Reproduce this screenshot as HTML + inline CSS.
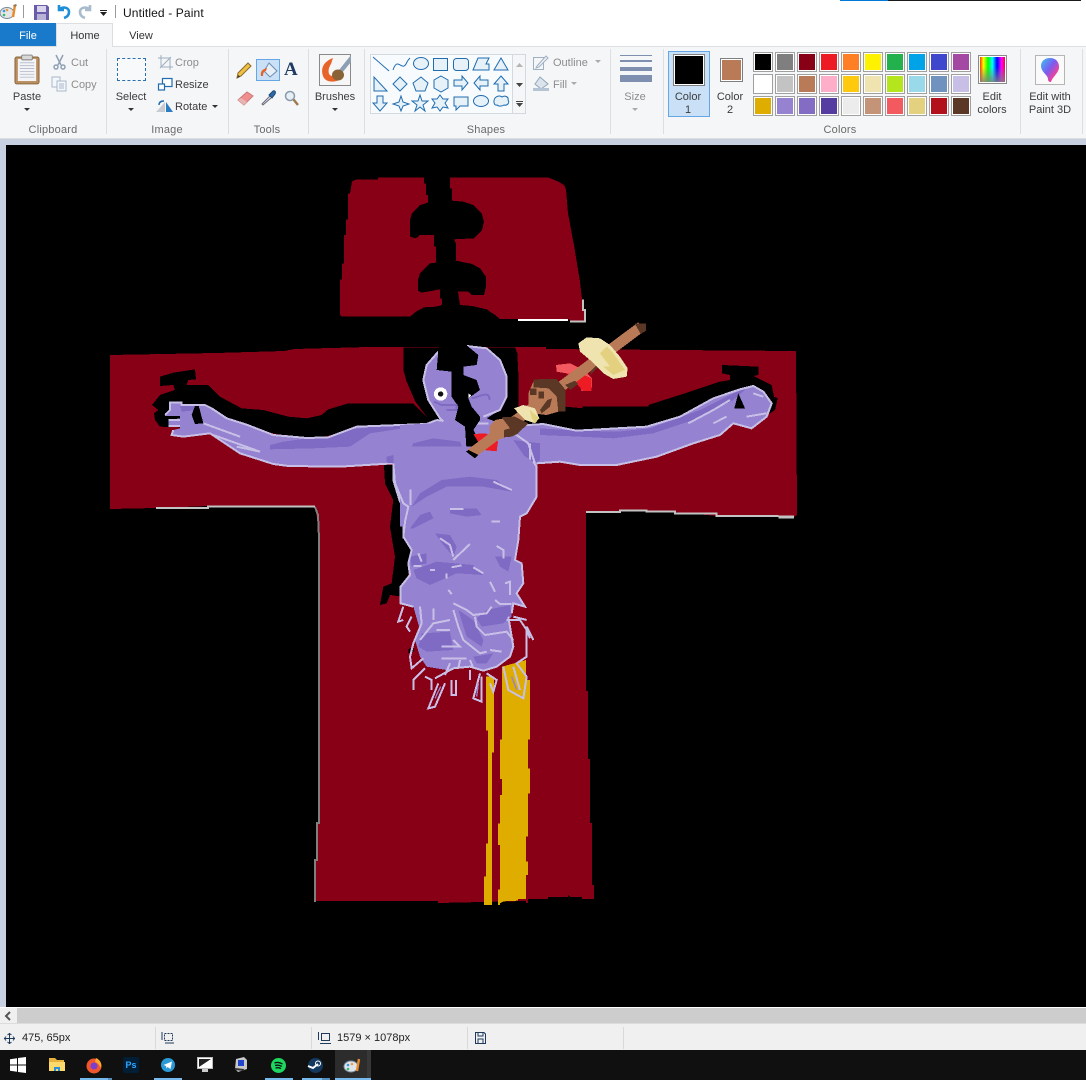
<!DOCTYPE html>
<html><head><meta charset="utf-8"><title>Untitled - Paint</title>
<style>
html,body{margin:0;padding:0;width:1086px;height:1080px;overflow:hidden;background:#fff}
body{position:relative;font-family:"Liberation Sans",sans-serif;font-size:11px;color:#3c3c3c}
.a{position:absolute}
.t{position:absolute;white-space:nowrap;line-height:14px;height:14px;margin-top:1px}
.c{transform:translateX(-50%);text-align:center}
.g{color:#8c8c8c}
.l{color:#6a6a6a;letter-spacing:.2px}
.s{position:absolute;top:49px;width:1px;height:85px;background:#dcdee0}
.p{position:absolute;width:18px;height:18px;border:1px solid #a0a0a0;box-shadow:inset 0 0 0 1px #fff}
svg{position:absolute;overflow:visible}
</style></head><body>

<!-- title -->
<div class="a" style="left:840px;top:0;width:48px;height:1px;background:#0078d7"></div>
<div class="a" style="left:888px;top:0;width:193px;height:1px;background:#1a1a1a"></div>
<svg style="left:0;top:2px" width="18" height="20" viewBox="0 0 18 20"><ellipse cx="7" cy="11" rx="7" ry="5.5" fill="#e6e6e6" stroke="#7a8a9a"/><circle cx="4" cy="9" r="1.3" fill="#2f9de0"/><circle cx="7" cy="8" r="1.3" fill="#e94"/><circle cx="4" cy="13" r="1.3" fill="#3b7"/><path d="M13 15L15 3" stroke="#e88a2a" stroke-width="2.4"/><path d="M13.5 4l3-1" stroke="#975" stroke-width="2"/></svg>
<div class="a" style="left:23px;top:5px;width:1px;height:13px;background:#9a9a9a"></div>
<svg style="left:34px;top:5px" width="15" height="15" viewBox="0 0 15 15"><path d="M0 0H13L15 2V15H0Z" fill="#6a5ca8"/><rect x="3" y="1" width="9" height="6" fill="#d9d4ec"/><rect x="3" y="9" width="9" height="6" fill="#b8b2d6"/></svg>
<svg style="left:56px;top:4px" width="15" height="16" viewBox="0 0 15 16"><path d="M3 1V6H8M3 6C6 2 13 3 13 8C13 11 11 13 8 14" fill="none" stroke="#1f8ed8" stroke-width="2.6"/></svg>
<svg style="left:78px;top:4px" width="15" height="16" viewBox="0 0 15 16"><path d="M12 1V6H7M12 6C9 2 2 3 2 8C2 11 4 13 7 14" fill="none" stroke="#a9bccd" stroke-width="2.6"/></svg>
<div class="a" style="left:100px;top:10px;width:7px;height:1px;background:#222"></div>
<svg style="left:100px;top:12px" width="7" height="4"><path d="M0 0H7L3.5 4Z" fill="#222"/></svg>
<div class="a" style="left:115px;top:5px;width:1px;height:13px;background:#9a9a9a"></div>
<div class="t" style="left:123px;top:5px;font-size:12px;color:#111;letter-spacing:.13px">Untitled - Paint</div>

<!-- tabs -->
<div class="a" style="left:0;top:23px;width:56px;height:23px;background:#1979ca"></div>
<div class="t c" style="left:28px;top:28px;color:#fff">File</div>
<div class="a" style="left:56px;top:23px;width:57px;height:24px;background:#f5f6f7;border:1px solid #dcdee0;border-bottom:0;box-sizing:border-box;z-index:2"></div>
<div class="t c" style="left:85px;top:28px;color:#333;z-index:3">Home</div>
<div class="t c" style="left:141px;top:28px;color:#333">View</div>

<!-- ribbon -->
<div class="a" style="left:0;top:46px;width:1086px;height:93px;background:#f5f6f7;border-top:1px solid #dcdee0;border-bottom:1px solid #dcdee0;box-sizing:border-box"></div>
<div class="a" style="left:0;top:139px;width:1086px;height:6px;background:#c7d0e1"></div>
<div class="a" style="left:0;top:145px;width:6px;height:862px;background:#c7d0e1"></div>
<div class="s" style="left:106px"></div><div class="s" style="left:228px"></div><div class="s" style="left:308px"></div><div class="s" style="left:364px"></div><div class="s" style="left:610px"></div><div class="s" style="left:663px"></div><div class="s" style="left:1020px"></div><div class="s" style="left:1082px"></div>

<!-- Clipboard -->
<svg style="left:14px;top:54px" width="26" height="31" viewBox="0 0 27 32"><rect x="1" y="3" width="25" height="28" rx="2" fill="#b98d5e" stroke="#86653f"/><rect x="4" y="5" width="19" height="23" fill="#f4f4f6"/><path d="M6 9H21M6 12H21M6 15H21M6 18H21M6 21H21M6 24H21" stroke="#b8c0d0"/><rect x="8" y="1" width="11" height="5" rx="1" fill="#d8d8d8" stroke="#808080"/></svg>
<div class="t c" style="left:27px;top:89px">Paste</div>
<svg style="left:24px;top:108px" width="6" height="3"><path d="M0 0H6L3 3Z" fill="#333"/></svg>
<svg style="left:53px;top:55px" width="13" height="15" viewBox="0 0 13 15" fill="none" stroke="#8fa0b5" stroke-width="1.5"><path d="M3 0L8 10M10 0L5 10"/><circle cx="3" cy="12" r="2"/><circle cx="10" cy="12" r="2"/></svg>
<div class="t g" style="left:71px;top:55px">Cut</div>
<svg style="left:51px;top:76px" width="16" height="16" viewBox="0 0 16 16" fill="#f3f6fa" stroke="#a9b8ca"><rect x="1" y="1" width="8" height="10"/><rect x="6" y="5" width="9" height="10"/><path d="M8 8h5M8 10h5M8 12h5"/></svg>
<div class="t g" style="left:71px;top:77px">Copy</div>
<div class="t c l" style="left:53px;top:122px">Clipboard</div>

<!-- Image -->
<div class="a" style="left:117px;top:58px;width:29px;height:23px;border:1px dashed #2a6fb0;box-sizing:border-box;background:#f8f9fa"></div>
<div class="t c" style="left:131px;top:89px">Select</div>
<svg style="left:128px;top:108px" width="6" height="3"><path d="M0 0H6L3 3Z" fill="#333"/></svg>
<svg style="left:158px;top:55px" width="15" height="15" viewBox="0 0 15 15" fill="none" stroke="#9fadc0"><path d="M3 0V12H15M0 3H12V15M2 13L13 2"/></svg>
<div class="t g" style="left:175px;top:55px">Crop</div>
<svg style="left:158px;top:78px" width="15" height="13" viewBox="0 0 15 13" fill="#fff" stroke="#1f6cb0" stroke-width="1.2"><rect x="4.5" y=".5" width="9.5" height="8"/><rect x=".5" y="6" width="6" height="6"/></svg>
<div class="t" style="left:175px;top:77px">Resize</div>
<svg style="left:156px;top:99px" width="17" height="14" viewBox="0 0 17 14"><path d="M0 13L9 3V13Z" fill="#c8ccd2"/><path d="M10 3L17 13H10Z" fill="#2c7cc0"/><path d="M3 6C3 3 5 2 8 2" fill="none" stroke="#1f6cb0" stroke-width="1.4"/></svg>
<div class="t" style="left:175px;top:99px">Rotate</div>
<svg style="left:212px;top:105px" width="6" height="3"><path d="M0 0H6L3 3Z" fill="#333"/></svg>
<div class="t c l" style="left:167px;top:122px">Image</div>

<!-- Tools -->
<div class="a" style="left:256px;top:59px;width:24px;height:22px;background:#c9e0f7;border:1px solid #64a6e6;box-sizing:border-box"></div>
<svg style="left:236px;top:62px" width="16" height="17" viewBox="0 0 16 17"><path d="M12 1L15 4L5 14L1 16L2 11Z" fill="#f0c040" stroke="#8a6a2a"/><path d="M1 16L2.5 13L4 14.5Z" fill="#333"/></svg>
<svg style="left:259px;top:61px" width="19" height="18" viewBox="0 0 19 18"><path d="M10 2L18 10L11 16L5 10Z" fill="#e6eff8" stroke="#6d8cad"/><path d="M2 15C1 10 4 8 8 7L7 10C5 10 4 12 4 15Z" fill="#e8632a"/></svg>
<div class="a" style="left:284px;top:58px;font:bold 19px 'Liberation Serif',serif;color:#1f3a63;line-height:24px">A</div>
<svg style="left:237px;top:91px" width="17" height="15" viewBox="0 0 17 15"><path d="M1 9L10 1L16 5L7 14Z" fill="#f08f8f" stroke="#c77"/><path d="M1 9L7 14L10 11L4 7Z" fill="#e8b4b4"/></svg>
<svg style="left:261px;top:90px" width="15" height="16" viewBox="0 0 15 16"><path d="M9 6L1 14L2 15L10 8" fill="#e8eef4" stroke="#667"/><path d="M8 5L12 1C14 0 15 2 14 4L11 8Z" fill="#2a6aa8" stroke="#1d4a78"/></svg>
<svg style="left:284px;top:90px" width="15" height="16" viewBox="0 0 15 16" fill="none"><circle cx="6" cy="6" r="4.5" fill="#e6eef6" stroke="#8a9aaa" stroke-width="1.5"/><path d="M9.5 9.5L14 15" stroke="#a07a50" stroke-width="2.5"/></svg>
<div class="t c l" style="left:267px;top:122px">Tools</div>

<!-- Brushes -->
<svg style="left:319px;top:54px" width="32" height="32" viewBox="0 0 32 32"><rect x=".5" y=".5" width="31" height="31" fill="#f6f6f6" stroke="#8a8a8a"/><path d="M14 4C6 7 1 13 4 22C6 28 14 29 20 26L15 22C9 23 8 16 12 10Z" fill="#e8632a"/><path d="M32 1L20 16L23 19L32 8Z" fill="#8da0b3"/><ellipse cx="19" cy="21" rx="6" ry="5.5" fill="#8a6238"/></svg>
<div class="t c" style="left:335px;top:89px">Brushes</div>
<svg style="left:332px;top:108px" width="6" height="3"><path d="M0 0H6L3 3Z" fill="#333"/></svg>

<!-- Shapes -->
<div class="a" style="left:370px;top:54px;width:143px;height:60px;background:#f8fbfd;border:1px solid #d5d8dc;box-sizing:border-box"></div>
<div class="a" style="left:512px;top:54px;width:14px;height:60px;background:#f5f6f7;border:1px solid #d5d8dc;box-sizing:border-box"></div>
<svg style="left:516px;top:63px" width="7" height="4"><path d="M0 4H7L3.5 0Z" fill="#b5b5b5"/></svg>
<svg style="left:516px;top:83px" width="7" height="4"><path d="M0 0H7L3.5 4Z" fill="#444"/></svg>
<div class="a" style="left:516px;top:101px;width:7px;height:1px;background:#444"></div>
<svg style="left:516px;top:103px" width="7" height="4"><path d="M0 0H7L3.5 4Z" fill="#444"/></svg>
<svg style="left:360px;top:50px" width="160" height="65" viewBox="0 0 160 65" fill="#e6f1f8" stroke="#1f6cb0" stroke-width="1">
<path d="M13 7L29 21" fill="none"/><path d="M33 20C38 5 42 24 47 12C48 10 49 9 50 8" fill="none"/>
<ellipse cx="61" cy="13.500" rx="7.500" ry="6"/><rect x="73.500" y="8.500" width="14" height="12"/><rect x="93.500" y="8.500" width="15" height="12" rx="3"/><path d="M113 20L118 8H129L126 14H129V20Z"/><path d="M134 20L141 8L148 20Z"/>
<path d="M14 27V41H27Z"/><path d="M40 27L47 34L40 41L33 34Z"/><path d="M61 27L68 33L65 41H56L53 33Z"/><path d="M81 26L88 30V38L81 42L74 38V30Z"/><path d="M94 30H102V26L108 33L102 40V36H94Z"/><path d="M128 30H120V26L114 33L120 40V36H128Z"/><path d="M141 26L148 34H144V41H138V34H134Z"/>
<g transform="translate(0 -4)"><path d="M17 50V57H13L20 65L27 57H23V50Z"/><path d="M41 50L43 56L49 58L43 60L41 65L39 60L33 58L39 56Z"/><path d="M60 49L62 55L68 55L63 59L65 65L60 61L55 65L57 59L52 55L58 55Z"/><path d="M80 49L83 53L88 53L85 57L88 62L83 61L80 65L77 61L72 62L75 57L72 53L77 53Z"/><path d="M94 51H108V60H100L96 64V60H94Z"/><ellipse cx="121" cy="55" rx="7.500" ry="5.500"/><path d="M135 52C138 49 141 50 142 51C145 49 149 51 148 54C150 57 147 60 144 59C141 61 138 60 137 59C134 60 133 55 135 52Z"/></g></svg>
<svg style="left:533px;top:55px" width="16" height="15" viewBox="0 0 16 15" fill="none" stroke="#9fb0c2"><rect x=".5" y="2.500" width="10" height="12"/><path d="M4 11L13 1L15 3L6 12L3 13Z" fill="#eef2f6"/></svg>
<div class="t g" style="left:553px;top:55px">Outline</div>
<svg style="left:595px;top:60px" width="6" height="3"><path d="M0 0H6L3 3Z" fill="#aaa"/></svg>
<svg style="left:533px;top:76px" width="16" height="16" viewBox="0 0 16 16"><path d="M7 1L15 8L8 13L2 8Z" fill="#dbe4ed" stroke="#92a6ba"/><rect x="0" y="12" width="16" height="3" fill="#b4c4d4"/></svg>
<div class="t g" style="left:553px;top:77px">Fill</div>
<svg style="left:571px;top:82px" width="6" height="3"><path d="M0 0H6L3 3Z" fill="#aaa"/></svg>
<div class="t c l" style="left:486px;top:122px">Shapes</div>

<!-- Size -->
<div class="a" style="left:620px;top:55px;width:32px;height:1px;background:#7e8fb0"></div>
<div class="a" style="left:620px;top:60px;width:32px;height:2px;background:#7e8fb0"></div>
<div class="a" style="left:620px;top:67px;width:32px;height:4px;background:#7e8fb0"></div>
<div class="a" style="left:620px;top:75px;width:32px;height:7px;background:#7e8fb0"></div>
<div class="t c g" style="left:635px;top:89px">Size</div>
<svg style="left:632px;top:108px" width="6" height="3"><path d="M0 0H6L3 3Z" fill="#aaa"/></svg>

<!-- Colors -->
<div class="a" style="left:668px;top:51px;width:42px;height:66px;background:#c9e0f7;border:1px solid #64a6e6;box-sizing:border-box"></div>
<div class="a" style="left:673px;top:54px;width:32px;height:32px;background:#000;border:1px solid #7f7f7f;box-shadow:inset 0 0 0 1px #fff;box-sizing:border-box"></div>
<div class="t c" style="left:688px;top:89px">Color</div><div class="t c" style="left:688px;top:102px">1</div>
<div class="a" style="left:720px;top:58px;width:23px;height:24px;background:#b97a57;border:1px solid #7f7f7f;box-shadow:inset 0 0 0 1px #fff;box-sizing:border-box"></div>
<div class="t c" style="left:730px;top:89px">Color</div><div class="t c" style="left:730px;top:102px">2</div>
<div class="p" style="left:753px;top:52px;background:#000"></div><div class="p" style="left:775px;top:52px;background:#7f7f7f"></div><div class="p" style="left:797px;top:52px;background:#880015"></div><div class="p" style="left:819px;top:52px;background:#ed1c24"></div><div class="p" style="left:841px;top:52px;background:#ff7f27"></div><div class="p" style="left:863px;top:52px;background:#fff200"></div><div class="p" style="left:885px;top:52px;background:#22b14c"></div><div class="p" style="left:907px;top:52px;background:#00a2e8"></div><div class="p" style="left:929px;top:52px;background:#3f48cc"></div><div class="p" style="left:951px;top:52px;background:#a349a4"></div>
<div class="p" style="left:753px;top:74px;background:#fff"></div><div class="p" style="left:775px;top:74px;background:#c3c3c3"></div><div class="p" style="left:797px;top:74px;background:#b97a57"></div><div class="p" style="left:819px;top:74px;background:#ffaec9"></div><div class="p" style="left:841px;top:74px;background:#ffc90e"></div><div class="p" style="left:863px;top:74px;background:#efe4b0"></div><div class="p" style="left:885px;top:74px;background:#b5e61d"></div><div class="p" style="left:907px;top:74px;background:#99d9ea"></div><div class="p" style="left:929px;top:74px;background:#7092be"></div><div class="p" style="left:951px;top:74px;background:#c8bfe7"></div>
<div class="p" style="left:753px;top:96px;background:#dfac00"></div><div class="p" style="left:775px;top:96px;background:#9583d1"></div><div class="p" style="left:797px;top:96px;background:#836cc4"></div><div class="p" style="left:819px;top:96px;background:#553ca0"></div><div class="p" style="left:841px;top:96px;background:#ececec"></div><div class="p" style="left:863px;top:96px;background:#c49478"></div><div class="p" style="left:885px;top:96px;background:#f25a60"></div><div class="p" style="left:907px;top:96px;background:#e3d17f"></div><div class="p" style="left:929px;top:96px;background:#b2111b"></div><div class="p" style="left:951px;top:96px;background:#5b3825"></div>
<div class="a" style="left:978px;top:55px;width:29px;height:29px;border:1px solid #8a8a8a;box-shadow:inset 0 0 0 1px #fff;box-sizing:border-box;background:linear-gradient(to bottom,rgba(128,128,128,0) 40%,rgba(128,128,128,.9)),linear-gradient(to right,#f00,#ff0,#0f0,#0ff,#00f,#f0f,#f00)"></div>
<div class="t c" style="left:992px;top:89px">Edit</div><div class="t c" style="left:992px;top:102px">colors</div>
<div class="t c l" style="left:840px;top:122px">Colors</div>
<div class="a" style="left:1035px;top:55px;width:30px;height:30px;background:#fafafa;border:1px solid #b5b5b5;box-sizing:border-box"></div>
<svg style="left:1040px;top:57px" width="20" height="26" viewBox="0 0 20 26"><defs><linearGradient id="q" x1="0" y1="0" x2="1" y2="1"><stop offset="0" stop-color="#38c6ef"/><stop offset=".45" stop-color="#7a5cf0"/><stop offset=".75" stop-color="#f0409a"/><stop offset="1" stop-color="#f7a030"/></linearGradient></defs><path d="M10 1C16 1 19 5 19 10C19 16 13 19 11 25C9 25 8 24 8 22C8 18 1 15 1 9C1 4 5 1 10 1Z" fill="url(#q)"/></svg>
<div class="t c" style="left:1050px;top:89px">Edit with</div><div class="t c" style="left:1050px;top:102px">Paint 3D</div>

<!-- canvas -->
<div class="a" style="left:6px;top:145px;width:1080px;height:862px;background:#000"></div>
<svg class="a" style="left:0;top:0" width="1086" height="1080" viewBox="0 0 1086 1080" shape-rendering="crispEdges">
<!-- main cross -->
<polygon fill="#880015" points="110,355 216,353 284,351 294,349 368,347 403,347 515,347 546,347 546,349 796,351 797,515 794,517 778,516 717,516 675,512 620,511 586,512 586,691 588,691 588,759 590,759 590,823 592,823 592,885 594,885 594,899 582,899 582,897 570,897 568,895 568,897 548,897 548,899 528,899 528,903 526,903 526,901 438,903 438,901 316,901 316,860 318,860 318,823 320,823 320,538 318,525 315,507 208,506 156,508 110,509"/>
<!-- top block -->
<g transform="translate(330 170) scale(.33333)">
<polygon fill="#880015" points="144,22 282,22 282,40 288,40 288,75 294,75 294,98 270,105 246,130 240,150 240,200 258,205 270,195 312,195 312,230 318,230 318,278 300,280 270,310 264,330 264,362 276,368 330,358 330,385 336,385 336,405 318,410 282,412 258,425 240,440 36,440 30,435 30,328 36,328 36,280 42,280 42,195 48,195 48,148 54,148 54,70 60,70 66,35 78,28 144,28"/>
<polygon fill="#880015" points="360,22 654,22 685,35 702,45 708,58 714,130 720,160 726,195 732,225 738,262 744,298 750,335 756,388 756,420 762,420 762,452 720,452 714,447 510,447 495,435 470,418 426,408 390,405 384,365 414,365 426,375 462,375 468,350 468,320 450,295 426,282 378,272 378,220 372,208 432,205 456,180 462,155 455,130 430,105 400,95 366,92 366,55 360,55"/>
<path d="M564 450H714" stroke="#fff" stroke-width="6" fill="none"/>
<path d="M720 455H765V420H759V388" stroke="#c3c3c3" stroke-width="6" fill="none"/>
</g>
<!-- lines -->
<path d="M156 508H208V506.500H315" stroke="#c3c3c3" stroke-width="2" fill="none"/>
<path d="M315 507L318 515L319 538V823H317V860H315V902" stroke="#7f7f7f" stroke-width="2" fill="none"/>
<g transform="translate(400 310) scale(.33333)"><path d="M558 606H660V601H740V604H825V611H950V618H1135" stroke="#c3c3c3" stroke-width="6" fill="none"/><path d="M1135 621H1182" stroke="#c3c3c3" stroke-width="9" fill="none"/></g>
<!-- yellow -->
<g transform="translate(300 680) scale(.33333)" fill="#dfac00">
<polygon points="558,-10 582,-10 582,218 576,218 576,675 552,675 552,590 558,590 558,490 564,490 564,152 558,152"/>
<polygon points="606,-40 678,-60 678,0 690,0 690,178 684,178 684,266 690,266 690,340 684,340 684,470 678,470 678,544 684,544 684,585 678,585 678,657 654,657 654,662 612,664 600,670 600,675 594,675 594,628 600,628 600,495 594,495 594,430 600,430 600,345 606,345 606,297 600,297 600,178 606,178"/>
</g>
<!-- black shadows -->
<g transform="translate(140 320) scale(.33333)" fill="#000">
<polygon points="60,170 100,158 165,148 168,178 145,180 140,195 205,195 240,230 305,265 370,270 445,290 500,295 545,285 565,268 625,250 820,250 860,290 860,330 700,320 500,360 300,320 200,260 150,300 120,322 60,320 45,300 42,280 55,270 36,255 60,225 105,210 100,195 60,198"/>
<polygon points="790,82 1100,82 1100,420 860,420 860,290 826,245 800,185 790,150"/>
</g>
<g transform="translate(400 310) scale(.33333)" fill="#000">
<polygon points="345,112 352,130 355,190 355,290 497,290 548,295 548,290 745,290 745,285 870,245 960,215 990,210 990,195 966,190 966,165 1075,170 1075,195 1060,198 1115,225 1122,260 1133,265 1125,300 1110,310 1000,340 500,390 300,390 250,112"/>
</g>
<g transform="translate(370 450) scale(.33333)" fill="#000">
<polygon points="42,45 45,100 70,150 60,230 75,320 65,400 40,410 30,465 50,460 60,435 95,440 130,320 120,200 100,160 70,45"/>
<polygon points="115,598 130,590 130,605 115,610"/>
</g>
<!-- body -->
<g transform="translate(140 320) scale(.33333)">
<polygon fill="#9583d1" points="90,248 125,248 125,255 195,252 215,265 260,295 320,314 400,345 500,354 565,352 650,320 860,312 890,300 960,310 975,350 985,420 800,660 790,655 800,555 780,545 760,480 760,430 600,440 445,438 400,432 300,400 210,340 130,350 95,345 100,330 120,325 120,318 85,318 85,300 120,295 120,288 75,288 75,280 90,270"/>
<polygon fill="#7f6bc4" points="390,375 430,365 480,358 565,352 620,330 700,320 760,315 850,318 790,325 690,340 630,380 520,385 390,388"/>
<polygon fill="#7f6bc4" points="800,410 830,375 880,355 960,365 980,395 860,392"/>
<polygon fill="#7f6bc4" points="120,255 170,255 170,270 125,275"/>
<polygon fill="#000" points="165,258 175,253 190,310 165,312 155,285"/>
<path fill="none" stroke="#c8bfe7" stroke-width="6" d="M75 285L90 270V248H125V255H195L215 265L260 295L320 314L400 345L500 354L565 352L650 320L860 312L890 300"/>
<path fill="none" stroke="#c8bfe7" stroke-width="6" d="M85 300H120M85 318H120M100 330L95 345L130 350L210 340L300 400L400 432L445 438L600 440L760 430V480L780 545L800 555L790 620V655"/>
<path d="M890 300L960 310L975 350L985 395M815 375C850 350 920 350 960 365M190 310L300 350M220 345L360 395M290 380L360 395" stroke="#c8bfe7" stroke-width="6" fill="none"/>
<polygon fill="#7f6bc4" points="740,410 760,405 760,430 740,428"/>
</g>
<g transform="translate(400 310) scale(.33333)">
<polygon fill="#9583d1" points="340,348 430,342 530,362 650,355 740,350 840,320 940,265 1020,238 1060,228 1090,245 1115,280 1100,320 1055,355 1000,340 960,375 880,400 770,440 650,465 540,465 480,455 410,460 410,560 360,620 300,640 280,400"/>
<polygon fill="#9583d1" points="115,125 80,165 70,210 85,270 120,325 130,338 0,345 0,650 330,650 300,340 260,325 300,300 320,260 320,200 300,150 260,115 200,108"/>
<polygon fill="#7f6bc4" points="530,362 650,365 750,355 900,300 1000,250 1040,235 1000,270 880,330 760,370 640,385 540,380 420,375 420,355"/>
<polygon fill="#7f6bc4" points="20,440 40,400 100,385 180,395 190,420 100,410 40,420"/>
<polygon fill="#7f6bc4" points="340,390 420,400 420,450 395,470"/>
<polygon fill="#000" points="1015,250 1035,295 1003,295"/>
<path fill="none" stroke="#c8bfe7" stroke-width="6" d="M340 348L430 342L530 362L650 355L740 350L840 320L940 265L1020 238L1060 228L1090 245L1115 280L1100 320L1055 355L1000 340L960 375L880 400L770 440L650 465L540 465L480 455L410 460"/>
<path fill="none" stroke="#c8bfe7" stroke-width="6" d="M115 125L80 165L70 210L85 270L120 325L130 335M200 108L260 115L300 150L320 200V260L300 300L250 320M215 340H265"/>
<path d="M865 340L940 300L990 270M940 340L980 320M1040 320L1100 310M1060 250L1090 260M300 340L385 400L405 460M390 400V450" stroke="#c8bfe7" stroke-width="6" fill="none"/>
<!-- hair -->
<polygon fill="#000" points="115,122 110,180 155,185 155,260 175,290 165,330 195,350 200,425 215,435 240,395 220,360 240,330 240,320 215,290 205,265 240,240 230,210 190,195 190,170 230,165 235,135 200,106 120,90"/>
<circle cx="122" cy="252" r="20" fill="#fff"/><circle cx="122" cy="252" r="8" fill="#111"/>
<path d="M102 275L125 285H170V300H140M215 265C240 260 270 240 268 270" stroke="#7f6bc4" stroke-width="6" fill="none"/>
<polygon points="205,250 214,256 205,265" fill="#fff"/>
<path d="M33 538V610M150 597H190M275 637H300M350 580V650" stroke="#c8bfe7" stroke-width="6" fill="none"/>
<polygon fill="#7f6bc4" points="150,600 240,598 246,620 160,620"/>
<polygon fill="#7f6bc4" points="30,650 60,615 100,605 100,625 50,655"/>
<polygon fill="#7f6bc4" points="20,520 130,500 240,510 330,540 240,520 130,515 30,540"/>
</g>
<g transform="translate(370 450) scale(.33333)">
<polygon fill="#9583d1" points="70,40 75,100 100,160 115,170 105,215 100,260 125,300 115,340 120,375 92,410 92,460 130,470 150,540 135,570 150,620 170,650 230,660 290,650 340,662 380,650 420,620 430,590 415,500 425,490 430,460 465,470 440,430 460,400 455,340 435,330 445,270 450,200 470,190 500,140 500,50 490,35 420,-10 90,-10"/>
<g fill="#7f6bc4">
<polygon points="125,170 150,130 215,90 300,80 380,90 425,125 340,110 230,110 170,140"/>
<polygon points="120,235 150,195 180,185 190,205 130,235"/>
<polygon points="240,190 240,175 320,175 335,195 290,200"/>
<polygon points="195,250 240,255 260,290 250,320 220,285"/>
<polygon points="120,320 170,310 170,340 125,350"/>
<polygon points="130,360 200,335 310,345 340,375 260,370 180,405 140,385"/>
<polygon points="375,320 425,320 415,365 390,350"/>
<polygon points="350,480 420,465 425,500 400,520 335,530 320,505"/>
<polygon points="265,480 310,510 340,570 335,590 290,560"/>
<polygon points="155,550 240,545 250,600 170,605 145,590"/>
<polygon points="310,620 370,610 350,640 320,640"/>
</g>
<path fill="none" stroke="#c8bfe7" stroke-width="6" d="M70 40L75 100L100 160L115 170L105 215L100 260L125 300L115 340L120 375L92 410V460L130 470M500 50V140L470 190L450 200L445 270L435 330L455 340L460 400L440 430L465 470L430 460L425 490M500 50L490 35"/>
<path fill="none" stroke="#c8bfe7" stroke-width="6" d="M122 118V165M370 95L425 120M240 177H280M365 215H390M210 265L240 285L250 320M300 282L260 320L250 330M380 288L400 300V325M130 348H155M145 310L155 335M180 360H195M245 352L275 346M310 352L340 370M230 370V385M360 395L375 425M235 420L245 432M375 450L390 462H425M405 400L420 395V435M250 460L290 480L310 495L350 490L365 470M315 500L320 530L345 555L410 545L430 570M410 510H450L470 540L480 565M250 480L265 530L280 570L330 610L350 605M200 540H240M240 510L190 520L150 570M190 475V510M215 590H270L250 570M360 600L395 605M215 625H290M240 640L225 675M270 630L265 655M300 630L310 655"/>
<!-- lower edge and tendrils -->
<path fill="none" stroke="#c8bfe7" stroke-width="6" d="M100 470L85 515L100 510M125 500L110 530L120 545M150 470L155 520L130 580L120 620L125 655L160 625M165 655L130 690V720M165 680L185 690V720M205 700L175 775L195 770L225 700M195 685L250 655L300 650L340 662L380 650L420 620L430 590L415 500M245 690V735H258V690M300 660V690M330 670L310 745L335 755V680M350 670L380 690L370 725L360 700M400 650L415 720L460 745L470 680L440 640L470 620V530L490 570M430 500L470 510M430 650L450 720"/>
<path fill="none" stroke="#9583d1" stroke-width="4" d="M195 745L212 710M325 700L320 740M425 680L440 720"/>
</g>
<!-- skewer -->
<g transform="translate(400 310) scale(.33333)">
<polygon fill="#ed1c24" points="220,372 258,370 294,395 290,424 250,420"/>
<polygon fill="#f25a60" points="468,165 510,160 552,180 576,205 575,243 545,243 535,205 500,190 470,185"/>
<polygon fill="#ed1c24" points="500,190 540,190 575,205 575,243 550,243"/>
<path d="M212 432L724 50" stroke="#b97a57" stroke-width="32" fill="none"/>
<polygon fill="#5b3825" points="704,40 738,40 738,62 722,72"/>
<polygon fill="#5b3825" points="575,180 600,155 596,170 570,195"/>
<polygon fill="#efe4b0" points="535,100 560,82 600,85 630,105 660,140 683,175 680,200 640,207 610,190 570,150 540,125"/>
<polygon fill="#e3d17f" points="620,110 640,130 675,180 640,195 610,170 630,170 600,130"/>
<polygon fill="#b97a57" points="385,250 400,215 470,207 497,240 497,300 475,305 440,315 400,310 385,290"/>
<polygon fill="#5b3825" points="400,208 470,207 497,240 497,305 475,305 470,260 445,235 400,232"/>
<polygon fill="#5b3825" points="390,235 410,235 410,255 390,255"/>
<polygon fill="#5b3825" points="415,245 432,245 432,265 415,265"/>
<polygon fill="#5b3825" points="442,270 456,265 450,290 425,310 420,300"/>
<polygon fill="#5b3825" points="495,225 525,212 535,222 510,240"/>
<polygon fill="#efe4b0" points="342,295 370,285 405,295 418,325 405,340 375,330"/>
<polygon fill="#e3d17f" points="390,300 418,325 405,340 395,325"/>
<polygon fill="#b97a57" points="268,350 285,330 340,320 350,345 330,375 300,388 270,370"/>
<polygon fill="#5b3825" points="305,322 345,320 385,340 352,372 335,380 312,382 312,360 330,355"/>
<polygon fill="#000" points="198,425 225,445 235,435 205,420"/>
</g>
</svg>

<!-- scrollbar -->
<div class="a" style="left:0;top:1007px;width:1086px;height:1px;background:#fff"></div>
<div class="a" style="left:0;top:1008px;width:1086px;height:15px;background:#cdcdcd"></div>
<div class="a" style="left:0;top:1008px;width:17px;height:15px;background:#f0f0f0"></div>
<svg style="left:4px;top:1011px" width="8" height="10" viewBox="0 0 8 10"><path d="M6 1L2 5L6 9" fill="none" stroke="#555" stroke-width="2"/></svg>
<!-- status -->
<div class="a" style="left:0;top:1023px;width:1086px;height:27px;background:#f0f0f0;border-top:1px solid #dcdcdc;box-sizing:border-box"></div>
<div class="a" style="left:155px;top:1027px;width:1px;height:22px;background:#d9d9d9"></div>
<div class="a" style="left:311px;top:1027px;width:1px;height:22px;background:#d9d9d9"></div>
<div class="a" style="left:467px;top:1027px;width:1px;height:22px;background:#d9d9d9"></div>
<div class="a" style="left:623px;top:1027px;width:1px;height:22px;background:#d9d9d9"></div>
<svg style="left:4px;top:1033px" width="11" height="11" viewBox="0 0 11 11" fill="none" stroke="#1f3a5c"><path d="M5.500 0V11M0 5.500H11M3.500 2L5.500 .5L7.500 2M3.500 9L5.500 10.500L7.500 9M2 3.500L.5 5.500L2 7.500M9 3.500L10.500 5.500L9 7.500"/></svg>
<div class="t" style="left:22px;top:1030px;color:#222">475, 65px</div>
<svg style="left:161px;top:1032px" width="13" height="13" viewBox="0 0 13 13" fill="none" stroke="#1f3a5c"><rect x="3.500" y="1.500" width="8" height="7" stroke-dasharray="2 1"/><path d="M1 0V8M4 11H13"/></svg>
<svg style="left:317px;top:1032px" width="14" height="13" viewBox="0 0 14 13" fill="none" stroke="#1f3a5c"><rect x="4.500" y="1.500" width="8" height="7"/><path d="M1.500 0V8M3 11.500H14"/></svg>
<div class="t" style="left:337px;top:1030px;color:#222">1579 × 1078px</div>
<svg style="left:475px;top:1032px" width="11" height="12" viewBox="0 0 11 12" fill="none" stroke="#1f3a5c"><path d="M.5.500H9L10.500 2V11.500H.5Z"/><path d="M3 .5V4H8V.5M3 11.500V7H8V11.500"/></svg>

<!-- taskbar -->
<div class="a" style="left:0;top:1050px;width:1086px;height:30px;background:#101010"></div>
<div class="a" style="left:335px;top:1050px;width:32px;height:30px;background:#2c2c2c"></div>
<div class="a" style="left:367px;top:1050px;width:4px;height:30px;background:#383838"></div>
<div class="a" style="left:80px;top:1078px;width:28px;height:2px;background:#76b9ed"></div><div class="a" style="left:108px;top:1078px;width:4px;height:2px;background:#5590bc"></div>
<div class="a" style="left:154px;top:1078px;width:28px;height:2px;background:#76b9ed"></div>
<div class="a" style="left:265px;top:1078px;width:28px;height:2px;background:#76b9ed"></div>
<div class="a" style="left:302px;top:1078px;width:20px;height:2px;background:#76b9ed"></div><div class="a" style="left:322px;top:1078px;width:8px;height:2px;background:#5590bc"></div>
<div class="a" style="left:335px;top:1078px;width:36px;height:2px;background:#76b9ed"></div>
<svg style="left:10px;top:1057px" width="16" height="16" viewBox="0 0 16 16" fill="#fff"><path d="M0 2.200L7 1.200V7.500H0ZM8 1L16 0V7.500H8ZM0 8.500H7V14.800L0 13.800ZM8 8.500H16V16L8 15Z"/></svg>
<svg style="left:49px;top:1057px" width="16" height="15" viewBox="0 0 16 15"><path d="M0 1H6L8 3H15V14H0Z" fill="#e8b33c"/><path d="M0 5H16V14H0Z" fill="#fbd96b"/><path d="M5 14V10H11V14H9V12H7V14Z" fill="#2a8fd8"/></svg>
<svg style="left:86px;top:1057px" width="16" height="16" viewBox="0 0 16 16"><circle cx="8" cy="9" r="7.500" fill="#f0552c"/><path d="M10 1C15 3 16 8 15 11C13 8 12 6 9 5Z" fill="#ffa92c"/><circle cx="8" cy="9" r="3.500" fill="#7b3fd0"/></svg>
<div class="a" style="left:123px;top:1057px;width:16px;height:16px;background:#001e36;border-radius:2px;color:#31a8ff;font:bold 9px/16px 'Liberation Sans',sans-serif;text-align:center">Ps</div>
<svg style="left:161px;top:1058px" width="14" height="14" viewBox="0 0 14 14"><circle cx="7" cy="7" r="7" fill="#2a9ad6"/><path d="M2.500 7L11 3.500L9.500 11L6.500 9L5.500 10.500L5 8Z" fill="#fff"/></svg>
<svg style="left:197px;top:1057px" width="16" height="16" viewBox="0 0 16 16"><rect x=".5" y=".5" width="15" height="11" fill="#fff" stroke="#bbb"/><path d="M2 10L14 2V10Z" fill="#fff"/><path d="M2 2H14L2 10Z" fill="#222"/><rect x="5" y="12" width="6" height="3" fill="#ccc"/></svg>
<svg style="left:234px;top:1057px" width="14" height="16" viewBox="0 0 14 16"><path d="M2 2L10 0L13 3V12L4 15L1 12Z" fill="#c8c8c8"/><rect x="4" y="3" width="6" height="6" fill="#2244cc"/><path d="M1 12L10 13" stroke="#333" stroke-width="2"/></svg>
<svg style="left:271px;top:1058px" width="15" height="15" viewBox="0 0 15 15"><circle cx="7.500" cy="7.500" r="7.500" fill="#1ed760"/><path d="M3.500 5C6 4 9 4.500 11.500 6M4 7.500C6 7 8.500 7 10.800 8.400M4.500 10C6.500 9.500 8.500 9.500 10 10.600" stroke="#111" stroke-width="1.300" fill="none"/></svg>
<svg style="left:308px;top:1058px" width="15" height="15" viewBox="0 0 15 15"><circle cx="7.500" cy="7.500" r="7.500" fill="#15385f"/><path d="M0 8L5 10L10 6" stroke="#fff" stroke-width="2" fill="none"/><circle cx="10" cy="5.500" r="2.500" fill="none" stroke="#fff"/></svg>
<svg style="left:344px;top:1057px" width="17" height="16" viewBox="0 0 17 16"><ellipse cx="7" cy="9.500" rx="7" ry="5.500" fill="#dfe5ea" stroke="#7d8c9c"/><circle cx="4" cy="8" r="1.300" fill="#2f9de0"/><circle cx="8" cy="7" r="1.300" fill="#e94"/><circle cx="4" cy="12" r="1.300" fill="#3b7"/><path d="M13 14L15 2" stroke="#e88a2a" stroke-width="2.400"/></svg>
</body></html>
